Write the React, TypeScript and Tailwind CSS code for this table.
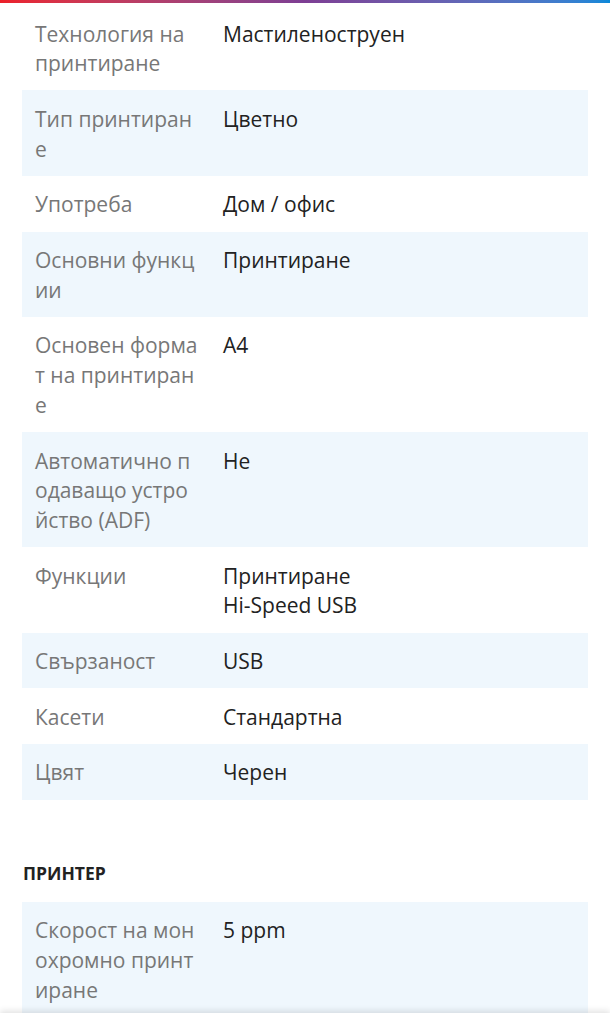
const groupOne: [string, string[]][] = [
  ["Технология на принтиране", ["Мастиленоструен"]],
  ["Тип принтиране", ["Цветно"]],
  ["Употреба", ["Дом / офис"]],
  ["Основни функции", ["Принтиране"]],
  ["Основен формат на принтиране", ["A4"]],
  ["Автоматично подаващо устройство (ADF)", ["Не"]],
  ["Функции", ["Принтиране", "Hi-Speed USB"]],
  ["Свързаност", ["USB"]],
  ["Касети", ["Стандартна"]],
  ["Цвят", ["Черен"]],
];

const groupTwo: [string, string[]][] = [
  ["Скорост на монохромно принтиране", ["5 ppm"]],
];

function SpecRow({ label, values, shaded }: { label: string; values: string[]; shaded: boolean }) {
  return (
    <div className={`grid grid-cols-[188px_1fr] ${shaded ? "bg-[#eff7fd]" : "bg-white"}`}>
      <div className="pl-[13px] pr-[10px] pt-[14.5px] pb-[11.5px] text-[#777] break-all">{label}</div>
      <div className="px-[13px] pt-[14.5px] pb-[11.5px] text-[#222]">
        {values.map((v) => (
          <div key={v}>{v}</div>
        ))}
      </div>
    </div>
  );
}

export default function App() {
  return (
    <div
      className="min-h-screen bg-white text-[21px] leading-[29.7px]"
      style={{ fontFamily: '"Open Sans", "Noto Sans", sans-serif' }}
    >
      <div className="h-[3px] bg-gradient-to-r from-[#ec1f28] via-[#7d3e94] to-[#0788d9]" />
      <div className="px-[22px] pt-[2px]">
        {groupOne.map(([label, values], i) => (
          <SpecRow key={label} label={label} values={values} shaded={i % 2 === 1} />
        ))}
        <h3 className="mt-[61px] mb-[17px] text-[17.5px] leading-[24px] font-bold uppercase text-[#222] pl-px">
          Принтер
        </h3>
        {groupTwo.map(([label, values]) => (
          <SpecRow key={label} label={label} values={values} shaded />
        ))}
        <div className="h-[40px]" />
      </div>
      <div className="fixed left-0 right-0 top-[1013px] h-[20px] bg-white shadow-[0_-2px_6px_rgba(0,0,0,0.12)]" />
    </div>
  );
}
